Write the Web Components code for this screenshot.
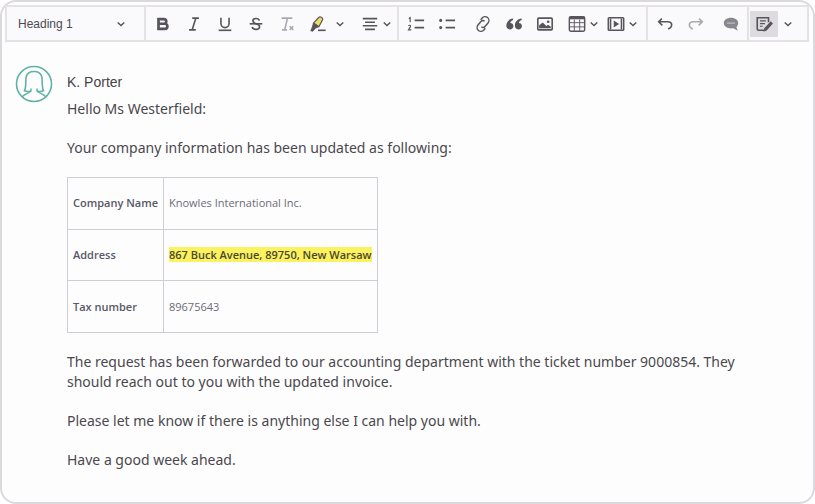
<!DOCTYPE html>
<html lang="en">
<head>
<meta charset="utf-8">
<title>Message editor</title>
<style>
  * { box-sizing: border-box; }

  body {
    margin: 0;
    min-height: 100vh;
    display: flex;
    background: #fff;
  }
</style>
</head>
<body>
<e-editor>
  <e-toolbar slot="toolbar"></e-toolbar>
  <e-message from="K. Porter">
    <p>Hello Ms Westerfield:</p>
    <p>Your company information has been updated as following:</p>
    <e-details></e-details>
    <p>The request has been forwarded to our accounting department with the ticket number 9000854. They should reach out to you with the updated invoice.</p>
    <p>Please let me know if there is anything else I can help you with.</p>
    <p>Have a good week ahead.</p>
  </e-message>
</e-editor>

<script>
const define = (name, html, setup) => {
  const template = document.createElement('template');
  template.innerHTML = html;

  customElements.define(name, class extends HTMLElement {
    constructor () {
      super();
      this.attachShadow({mode: 'open'})
          .appendChild(template.content.cloneNode(true));
    }

    connectedCallback () {
      if (setup) setup(this, this.shadowRoot);
    }
  });
};

// all icons are drawn on a 20x20 grid, stroked with the current colour
const ICONS = {
  bold: '<path stroke-width="3" d="M5 4.500h6a2.600 2.600 0 0 1 0 5.200H5zM5 9.700h7a2.900 2.900 0 0 1 0 5.800H5z"/>',
  italic: '<path d="M8 3.500h7.500M4.500 16.500H12M12 3.500l-4 13"/>',
  underline: '<path d="M5.500 3v6.500a4.500 4.500 0 0 0 9 0V3"/><path d="M3 17h14"/>',
  strike: '<path d="M13.700 6.200C13 3 6.500 3.200 6.500 6.500c0 4 7.500 2.500 7.500 6.500 0 4-7.700 3.800-8.200.2"/><path d="M3 9.800h14"/>',
  clear: '<path d="M4 3.500h12M10.500 3.500l-3 13M4.500 16.500h5.500"/><path d="M13 12.500l4 4m0-4l-4 4"/>',
  marker: '<path fill="#e9df65" stroke-width="1.300" d="M5 9L11 2.500c1.500-1 4.500.5 4.200 2.500L11 13z"/><path fill="currentColor" stroke-width="1" d="M5 9l6 4-3.500 1.500L4 18l-2-.5L3.500 14z"/><path d="M10 17h8.500"/>',
  align: '<path d="M2 4h16M4.500 8h11M2 12h16M4.500 16h11"/>',
  numbers: '<path d="M8.500 6H19M8.500 14H19"/><path stroke-width="1.300" d="M2 4l1.500-1V8M1.500 12c1.200-1.200 3-.5 2.300.9L1.700 16.500h3"/>',
  bullets: '<path d="M8.500 6H19M8.500 14H19"/><circle cx="3" cy="6" r="1.700" fill="currentColor" stroke="none"/><circle cx="3" cy="14" r="1.700" fill="currentColor" stroke="none"/>',
  link: '<g transform="rotate(-50 10 10)"><path stroke-width="1.600" d="M6.500 10.500c0 1.800 1 3 2.800 3H14.500a4 4 0 0 0 0-8.500H12M13.500 9.500c0-1.800-1-3-2.800-3H5.500a4 4 0 0 0 0 8.500H8"/></g>',
  quote: '<path fill="currentColor" stroke="none" d="M9 4C4 4.500 1.500 8 1.500 12c0 2.200 1.500 4 3.800 4s4-1.600 4-3.600S7.800 9 5.900 9C6.200 7.200 7.200 6 9 5.500zM18.500 4c-5 .5-7.500 4-7.500 8 0 2.200 1.500 4 3.800 4s4-1.600 4-3.600-1.500-3.400-3.400-3.400c.3-1.800 1.300-3 3.100-3.500z"/>',
  image: '<rect x="2" y="3.500" width="16" height="13" rx="1"/><path fill="currentColor" stroke="none" d="M3.500 14.800v-3.300l4-3.200 4 3.800 1.800-1.300 3.200 2.300v1.700z"/><circle cx="13.500" cy="7.500" r="1.500" fill="currentColor" stroke="none"/>',
  table: '<rect x="1.500" y="2" width="17" height="16" rx="1.500" stroke-width="1.600"/><path stroke-width="2.500" d="M2 3.500h16"/><path stroke-width="1" d="M2 8.500h16M2 13.200h16M7 5v13M13 5v13"/>',
  media: '<rect x="1.500" y="3" width="17" height="14" rx="1"/><path stroke-width="1.600" d="M4 4v12M16 4v12"/><path fill="currentColor" stroke="none" d="M7.500 6l6 4-6 4z"/>',
  undo: '<path d="M6.500 4L3 7.500l4 4M3.500 7.500H13c5.500 0 6 6 .5 8"/>',
  redo: '<path d="M13.500 4L17 7.500l-4 4M16.500 7.500H7c-5.500 0-6 6-.5 8"/>',
  comment: '<path fill="currentColor" stroke="none" d="M10 3c4.700 0 8 2.500 8 6 0 2-1 3.500-2 4.500l1.500 4-5-2.800C6.500 15.600 2 13 2 9c0-3.500 3.300-6 8-6z"/><path stroke="#c4c2c8" stroke-width="1.200" d="M5.500 9h9"/>',
  track: '<path stroke-width="1.800" d="M15 8V3H2.500v12.500c0 1 .5 1.500 1.500 1.500h6"/><path stroke-width="1.300" d="M5.500 6.500H12M5.500 9.500h5.500M5.500 12.500h3"/><path fill="currentColor" stroke-width="1.500" d="M17.500 8l1.500 1.500-6.500 7-2 .8.500-2.300z"/>',
  chevron: '<path stroke-width="3" d="M3.500 7l6.500 6 6.500-6"/>'
};

const icon = name => `<svg viewBox="0 0 20 20" aria-hidden="true">${ICONS[name]}</svg>`;

define('e-tool', `
  <style>
    :host { display: flex; width: 31px; }

    button {
      flex: 1;
      display: flex;
      align-items: center;
      justify-content: center;
      height: 26px;
      padding: 0;
      border: 0;
      background: transparent;
      color: #57555b;
    }

    svg {
      flex: none;
      width: 18px;
      height: 18px;
      fill: none;
      stroke: currentColor;
      stroke-width: 1.800;
    }

    :host([narrow]) { width: 24px; }
    :host([icon="chevron"]) { width: 10px; }
    :host([icon="chevron"]) svg { width: 10px; height: 10px; }
    :host([faded]) button { color: #aba9b0; }
    :host([muted]) button { color: #89878e; }
    :host([active]) { width: 28px; }
    :host([active]) button { background: #dddbdf; }
  </style>
  <button type="button"></button>
`, (host, root) => {
  const button = root.querySelector('button');
  button.setAttribute('aria-label', host.getAttribute('label'));
  button.innerHTML = icon(host.getAttribute('icon'));
});

define('e-tool-group', `
  <style>
    :host {
      display: flex;
      align-items: center;
      gap: var(--gap, 0);
      padding: 0 1px;
      border-right: 2px solid #e4e2e7;
    }
  </style>
  <slot></slot>
`);

define('e-heading-select', `
  <style>
    :host { display: grid; align-items: center; width: 135px; }
    select, svg { grid-area: 1 / 1; }

    select {
      appearance: none;
      height: 30px;
      padding: 0 10px;
      border: 0;
      background: transparent;
      color: #4c4a50;
      font: 12px "Liberation Sans", Arial, sans-serif;
    }

    svg {
      justify-self: end;
      width: 10px;
      height: 10px;
      margin-right: 17px;
      fill: none;
      stroke: #57555b;
      pointer-events: none;
    }
  </style>
  <select aria-label="Paragraph style">
    <option>Heading 1</option>
  </select>
  ${icon('chevron')}
`);

define('e-toolbar', `
  <style>
    :host {
      display: flex;
      min-height: 37px;
      border: 2px solid #e4e2e7;
      border-right: 0;
      background: #faf9fc;
    }

    .set { display: flex; }
    .styles { --gap: 13px; padding-right: 5px; }
    .styles .set:first-child e-tool:last-child { margin-left: 2px; }
    .inserts { --gap: 5px; padding-right: 8px; }
    .history { --gap: 4px; }
    .review { --gap: 5px; flex: 1; }
  </style>
  <e-tool-group><e-heading-select></e-heading-select></e-tool-group>
  <e-tool-group class="styles">
    <div class="set">
      <e-tool icon="bold" label="Bold"></e-tool>
      <e-tool icon="italic" label="Italic"></e-tool>
      <e-tool icon="underline" label="Underline"></e-tool>
      <e-tool icon="strike" label="Strikethrough"></e-tool>
      <e-tool icon="clear" label="Remove format" faded></e-tool>
      <e-tool icon="marker" label="Highlight"></e-tool>
      <e-tool icon="chevron" label="Highlight colours"></e-tool>
    </div>
    <div class="set">
      <e-tool icon="align" label="Alignment" narrow></e-tool>
      <e-tool icon="chevron" label="Alignment options"></e-tool>
    </div>
  </e-tool-group>
  <e-tool-group class="inserts">
    <div class="set">
      <e-tool icon="numbers" label="Numbered list"></e-tool>
      <e-tool icon="bullets" label="Bulleted list"></e-tool>
    </div>
    <div class="set">
      <e-tool icon="link" label="Link"></e-tool>
      <e-tool icon="quote" label="Block quote"></e-tool>
      <e-tool icon="image" label="Insert image"></e-tool>
    </div>
    <div class="set">
      <e-tool icon="table" label="Insert table" narrow></e-tool>
      <e-tool icon="chevron" label="Table options"></e-tool>
    </div>
    <div class="set">
      <e-tool icon="media" label="Insert media" narrow></e-tool>
      <e-tool icon="chevron" label="Media options"></e-tool>
    </div>
  </e-tool-group>
  <e-tool-group class="history">
    <div class="set">
      <e-tool icon="undo" label="Undo"></e-tool>
      <e-tool icon="redo" label="Redo" faded></e-tool>
    </div>
    <e-tool icon="comment" label="Comment" muted></e-tool>
  </e-tool-group>
  <e-tool-group class="review">
    <e-tool icon="track" label="Track changes" active></e-tool>
    <e-tool icon="chevron" label="Track changes options"></e-tool>
  </e-tool-group>
`);

define('e-editor', `
  <style>
    :host {
      flex: 1;
      display: flex;
      flex-direction: column;
      padding: 3px 4px 3px 3px;
      border: 2px solid #dbd9dd;
      border-radius: 16px;
      background: #fefdfe;
    }
  </style>
  <slot name="toolbar"></slot>
  <slot></slot>
`);

define('e-avatar', `
  <style>
    :host { display: block; }
    svg { display: block; width: 38px; height: 38px; fill: none; stroke: #62b1a6; }
  </style>
  <svg viewBox="0 0 38 38" aria-hidden="true">
    <circle cx="19" cy="19" r="17.500" stroke-width="1.600"/>
    <path stroke-width="1.500" d="M7.500 31.500c2-2.500 6-3 8.500-5.500v-2.500M30.500 31.500c-2-2.500-6-3-8.500-5.500v-2.500"/>
    <path stroke-width="1.600" d="M16 26c-2 .7-4.500.7-6.500-.2 2-4 .8-10 1.700-14 .9-3.800 4.300-5.300 7.800-5.300s6.900 1.500 7.800 5.300c.9 4-.3 10 1.700 14-2 .9-4.500.9-6.500.2"/>
  </svg>
`);

define('e-message', `
  <style>
    :host {
      display: grid;
      grid-template-columns: 38px 1fr;
      column-gap: 14px;
      padding: 22px 60px 20px 10px;
      color: #4a484d;
      font: 14px/20px "Noto Sans", sans-serif;
    }

    e-avatar { margin-top: 1px; }

    h2 {
      margin: 8px 0 7px;
      color: #454347;
      font: 14px/20px "Liberation Sans", Arial, sans-serif;
    }

    .body { display: grid; justify-items: start; gap: 19px; }
    ::slotted(p) { margin: 0; }
  </style>
  <e-avatar></e-avatar>
  <article>
    <h2></h2>
    <div class="body"><slot></slot></div>
  </article>
`, (host, root) => {
  root.querySelector('h2').textContent = host.getAttribute('from');
});

define('e-details', `
  <style>
    :host { display: block; }

    table {
      height: 156px;
      border-collapse: collapse;
      color: #6b6b78;
      font: 11px/16px "Open Sans", sans-serif;
    }

    th, td {
      padding: 0 5px;
      border: 1px solid #cfcdd6;
      text-align: left;
      white-space: nowrap;
    }

    th { color: #585866; font-weight: 600; }
    mark { background: #fbf25f; color: #4a472f; font-weight: 600; }
  </style>
  <table>
    <tr><th scope="row">Company Name</th><td>Knowles International Inc.</td></tr>
    <tr><th scope="row">Address</th><td><mark>867 Buck Avenue, 89750, New Warsaw</mark></td></tr>
    <tr><th scope="row">Tax number</th><td>89675643</td></tr>
  </table>
`);
</script>
</body>
</html>
